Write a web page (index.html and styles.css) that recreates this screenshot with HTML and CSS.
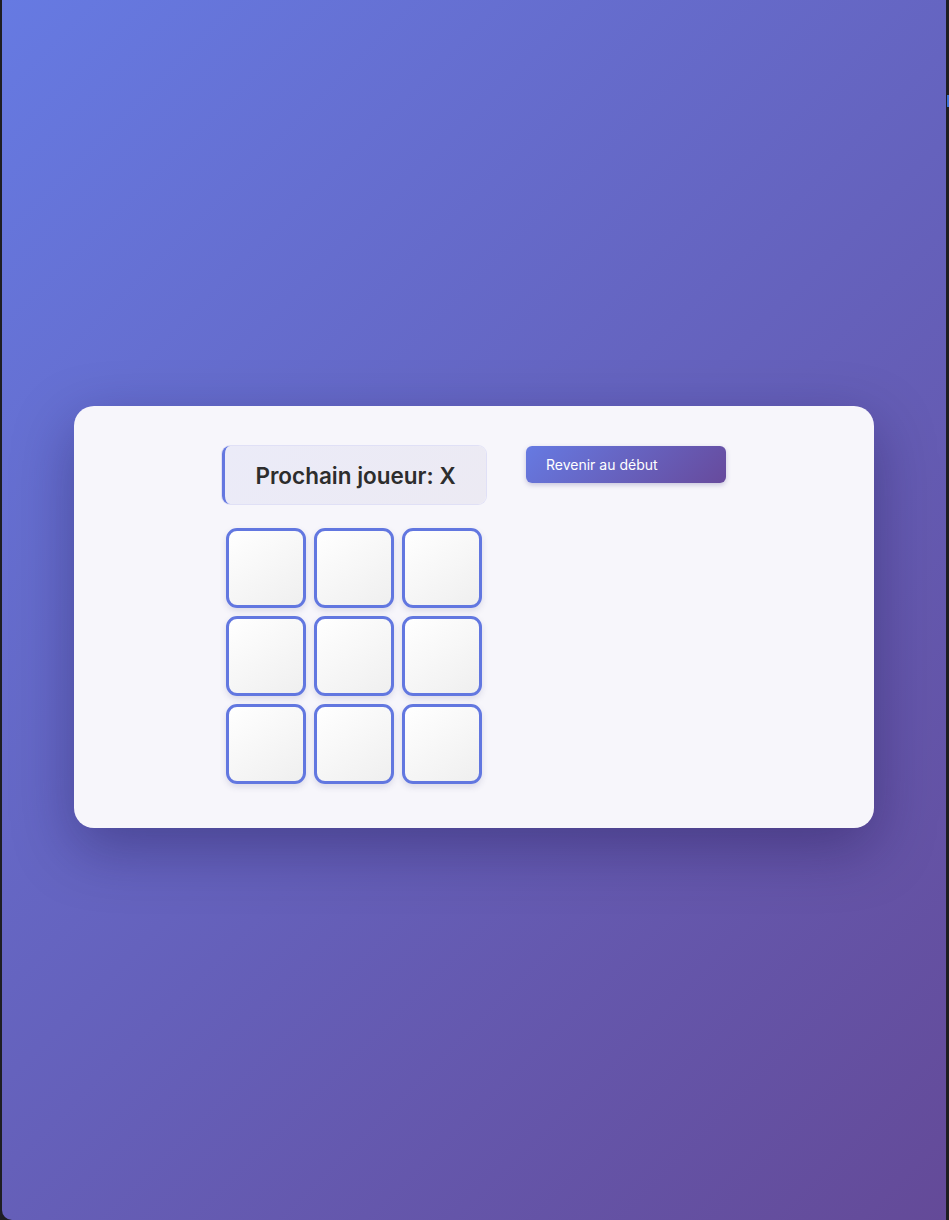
FILE: index.html
```html
<!DOCTYPE html>
<html lang="fr">
<head>
<meta charset="utf-8">
<title>Morpion</title>
<link rel="stylesheet" href="styles.css">
</head>
<body>
<div class="page">
  <div class="card">
    <div class="game-board">
      <div class="status">Prochain joueur: X</div>
      <div class="board">
        <button class="square"></button>
        <button class="square"></button>
        <button class="square"></button>
        <button class="square"></button>
        <button class="square"></button>
        <button class="square"></button>
        <button class="square"></button>
        <button class="square"></button>
        <button class="square"></button>
      </div>
    </div>
    <div class="game-info">
      <ol class="moves">
        <li><button class="move">Revenir au début</button></li>
      </ol>
    </div>
  </div>
</div>
<div class="edge"><span class="edge-mark"></span></div>
</body>
</html>
```
FILE: styles.css
```css
html, body {
  margin: 0;
  padding: 0;
  height: 100%;
}
body {
  display: flex;
  background: #1e1e22;
  font-family: Inter, "Noto Sans", sans-serif;
  overflow: hidden;
}
.page {
  margin-left: 2px;
  width: 944px;
  height: 1220px;
  box-sizing: border-box;
  padding-top: 14px;
  display: flex;
  align-items: center;
  justify-content: center;
  background: linear-gradient(135deg, #667ae2 0%, #644a98 100%);
  border-bottom-left-radius: 10px;
}
.edge {
  width: 3px;
  position: relative;
}
.edge-mark {
  position: absolute;
  left: 1px;
  top: 95px;
  width: 2px;
  height: 12px;
  background: #3b6fd6;
}
.card {
  width: 800px;
  height: 422px;
  box-sizing: border-box;
  padding: 40px;
  background: #f7f6fb;
  border-radius: 20px;
  box-shadow: 0 20px 60px rgba(20, 10, 60, 0.35);
  display: flex;
  justify-content: center;
  gap: 40px;
}
.game-board {
  width: 264px;
  display: flex;
  flex-direction: column;
  align-items: center;
}
.status {
  width: 264px;
  height: 58px;
  box-sizing: border-box;
  display: flex;
  align-items: center;
  justify-content: center;
  background: linear-gradient(135deg, #ebebf8 0%, #eceaf3 100%);
  border-left: 3px solid #6477e0;
  border-radius: 8px;
  box-shadow: 0 0 0 1px rgba(120, 130, 230, 0.18);
  font-size: 22.5px;
  font-weight: 600;
  color: #2d2d2d;
  letter-spacing: 0;
}
.board {
  margin-top: 24px;
  display: grid;
  grid-template-columns: repeat(3, 80px);
  grid-auto-rows: 80px;
  gap: 8px;
}
.square {
  margin: 0;
  padding: 0;
  border: 3px solid #6277e0;
  border-radius: 11px;
  background: linear-gradient(145deg, #ffffff 0%, #efefef 100%);
  box-shadow: 0 3px 6px rgba(60, 60, 120, 0.15);
}
.game-info {
  width: 200px;
}
.moves {
  list-style: none;
  margin: 0;
  padding: 0;
}
.move {
  width: 200px;
  height: 37px;
  padding: 0 20px;
  text-align: left;
  border: none;
  border-radius: 6px;
  background: linear-gradient(135deg, #667ae2 0%, #674a9c 100%);
  color: #ffffff;
  font-family: Inter, "Noto Sans", sans-serif;
  font-size: 14px;
  box-shadow: 0 2px 5px rgba(60, 50, 130, 0.25);
}
```
